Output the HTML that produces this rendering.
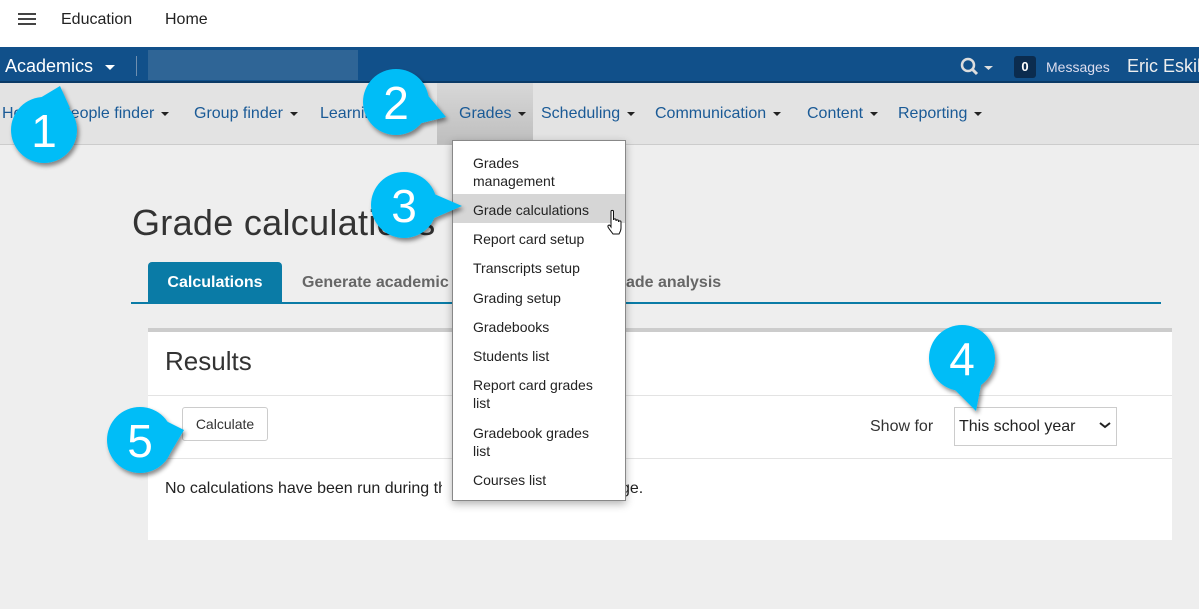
<!DOCTYPE html>
<html><head><style>
*{margin:0;padding:0;box-sizing:border-box}
body{width:1199px;height:609px;overflow:hidden;background:#eeeeee;font-family:"Liberation Sans",sans-serif;position:relative;color:#222}
.a{position:absolute;white-space:nowrap}
.top{position:absolute;left:0;top:0;width:1199px;height:47px;background:#fff}
.blue{position:absolute;left:0;top:47px;width:1199px;height:36px;background:#11508a;border-bottom:2px solid #0b3a66}
.nav{position:absolute;left:0;top:83px;width:1199px;height:62px;background:#e3e3e3;border-bottom:1px solid #ccc}
.ni{position:absolute;top:105px;font-size:16px;color:#1a5a96}
.car{display:inline-block;width:0;height:0;border-left:4px solid transparent;border-right:4px solid transparent;border-top:4px solid #222;margin-left:7px;vertical-align:middle}
.dd div{position:absolute;left:20px;font-size:14px;color:#222;line-height:18px}
</style></head><body>
<div class="top"></div>
<div class="a" style="left:18px;top:13px;width:18px;height:2px;background:#444;box-shadow:0 5px 0 #444,0 10px 0 #444"></div>
<div class="a" style="left:61px;top:11px;font-size:16px">Education</div>
<div class="a" style="left:165px;top:11px;font-size:16px">Home</div>
<div class="blue"></div>
<div class="a" style="left:5px;top:56px;font-size:18px;color:#fff">Academics <span class="car" style="border-top-color:#fff;border-width:5px 5px 0"></span></div>
<div class="a" style="left:136px;top:56px;width:1px;height:20px;background:#6f8fb0"></div>
<div class="a" style="left:148px;top:50px;width:210px;height:30px;background:#2f6596"></div>
<svg class="a" style="left:960px;top:57px" width="36" height="20"><circle cx="8" cy="8" r="6" fill="none" stroke="#ddd" stroke-width="2.5"/><line x1="12" y1="12" x2="17" y2="17" stroke="#ddd" stroke-width="3"/><path d="M24 9h9l-4.5 4z" fill="#ddd"/></svg>
<div class="a" style="left:1014px;top:56px;width:22px;height:22px;background:#0b2c4f;border-radius:3px;color:#fff;font-size:13px;font-weight:bold;text-align:center;line-height:22px">0</div>
<div class="a" style="left:1046px;top:59px;font-size:14px;color:#dde">Messages</div>
<div class="a" style="left:1127px;top:56px;font-size:18px;color:#eee">Eric Eskildsen</div>
<div class="nav"></div>
<div class="a" style="left:437px;top:83px;width:96px;height:62px;background:linear-gradient(#d8d8d8,#bdbdbd)"></div>
<div class="ni" style="left:2px">Home</div>
<div class="ni" style="left:60px">People finder<span class="car"></span></div>
<div class="ni" style="left:194px">Group finder<span class="car"></span></div>
<div class="ni" style="left:320px">Learning<span class="car"></span></div>
<div class="ni" style="left:459px">Grades<span class="car"></span></div>
<div class="ni" style="left:541px">Scheduling<span class="car"></span></div>
<div class="ni" style="left:655px">Communication<span class="car"></span></div>
<div class="ni" style="left:807px">Content<span class="car"></span></div>
<div class="ni" style="left:898px">Reporting<span class="car"></span></div>
<div class="a" style="left:132px;top:202px;font-size:36px;color:#333;letter-spacing:0.3px">Grade calculations</div>
<div class="a" style="left:148px;top:262px;width:134px;height:41px;background:#0a7ba6;border-radius:4px 4px 0 0;color:#fff;font-weight:bold;font-size:16px;text-align:center;line-height:42px">Calculations</div>
<div class="a" style="left:302px;top:274px;font-size:16px;font-weight:bold;color:#666">Generate academic</div>
<div class="a" style="left:626px;top:274px;font-size:16px;font-weight:bold;color:#666">ade analysis</div>
<div class="a" style="left:131px;top:302px;width:1030px;height:2px;background:#0a7ba6"></div>
<div class="a" style="left:148px;top:328px;width:1024px;height:212px;background:#fff;border-top:4px solid #ccc"></div>
<div class="a" style="left:165px;top:346px;font-size:26px;color:#333">Results</div>
<div class="a" style="left:148px;top:395px;width:1024px;height:1px;background:#e3e3e3"></div>
<div class="a" style="left:182px;top:407px;width:86px;height:34px;border:1px solid #ccc;border-radius:3px;font-size:14px;text-align:center;line-height:32px;color:#333">Calculate</div>
<div class="a" style="left:870px;top:418px;font-size:16px;color:#333">Show for</div>
<div class="a" style="left:954px;top:407px;width:163px;height:39px;border:1px solid #ccc;font-size:16px;padding:10px 4px;color:#222">This school year</div>
<svg class="a" style="left:1099px;top:420px" width="12" height="10"><path d="M1 3l5 4 5-4" stroke="#222" stroke-width="2" fill="none"/></svg>
<div class="a" style="left:148px;top:458px;width:1024px;height:1px;background:#e3e3e3"></div>
<div class="a" style="left:165px;top:480px;font-size:16px;color:#222">No calculations have been run during this period.</div>
<div class="a" style="left:442px;top:480px;width:215px;height:20px;background:#fff"></div>
<div class="a" style="left:621px;top:480px;font-size:16px;color:#222">ge.</div>
<div class="a dd" style="left:452px;top:140px;width:174px;height:361px;background:#fff;border:1px solid #888;box-shadow:0 3px 8px rgba(0,0,0,.3)">
<div class="a" style="left:0;top:53px;width:172px;height:29px;background:#d6d6d6"></div>
<div style="top:13px">Grades<br>management</div>
<div style="top:60px">Grade calculations</div>
<div style="top:89px">Report card setup</div>
<div style="top:118px">Transcripts setup</div>
<div style="top:148px">Grading setup</div>
<div style="top:177px">Gradebooks</div>
<div style="top:206px">Students list</div>
<div style="top:235px">Report card grades<br>list</div>
<div style="top:283px">Gradebook grades<br>list</div>
<div style="top:330px">Courses list</div>
</div>
<svg class="a" style="left:606px;top:209px" width="20" height="30"><path d="M5 2.5c0-1.5 2.5-1.5 2.5 0V11c0-1.5 2.5-1.5 2.5 0v1c0-1.5 2.5-1.5 2.5 0v1c0-1.5 2.5-1.5 2.5 0v6c0 3-1.5 5-2 6H7c-1-1.5-4-5-5-7-.5-1.5 1-2.5 2-1.5L5 18z" fill="#fff" stroke="#111" stroke-width="1"/></svg>
<svg class="a" style="left:0;top:0" width="1199" height="609">
<defs><filter id="s"><feDropShadow dx="2" dy="3" stdDeviation="2" flood-opacity=".45"/></filter></defs>
<g fill="#00bdf7" filter="url(#s)">
<circle cx="44" cy="130" r="33"/><path d="M30 104L60 86 70 108z"/>
<circle cx="396" cy="102" r="33"/><path d="M415 80L446 117 418 124z"/>
<circle cx="404" cy="205" r="33"/><path d="M425 190L462 206 425 222z"/>
<circle cx="962" cy="358" r="33"/><path d="M950 385L976 411 982 380z"/>
<circle cx="140" cy="440" r="33"/><path d="M160 418L184 430 165 462z"/>
</g>
<g fill="#fff" font-family="Liberation Sans,sans-serif" font-size="46" text-anchor="middle">
<text x="44" y="147">1</text><text x="396" y="119">2</text><text x="404" y="222">3</text><text x="962" y="375">4</text><text x="140" y="457">5</text>
</g>
</svg>
</body></html>
